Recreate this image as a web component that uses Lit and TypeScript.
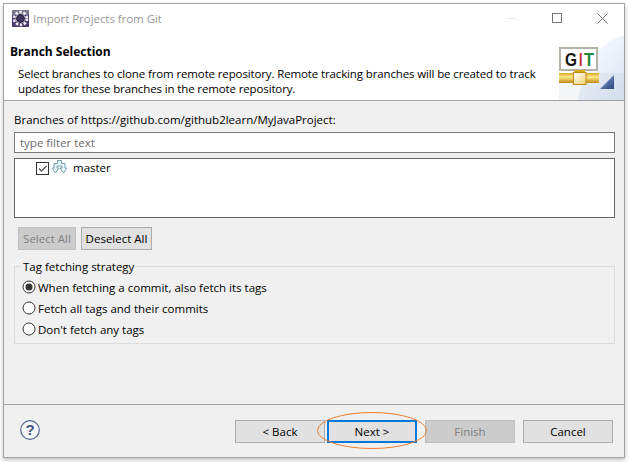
import { LitElement, html, svg, css } from "lit";
import { customElement } from "lit/decorators.js";

const svgDot = svg`<circle cx="7" cy="7" r="3.500" fill="#333"/>`;

@customElement("app-root")
export class AppRoot extends LitElement {
  static styles = css`
    :host { display: block; width: 629px; height: 462px; background: #fff; font-family: "Open Sans", "Noto Sans", sans-serif; font-size: 11.5px; color: #000; overflow: hidden; }
    .page { padding: 3px 4px 4px 3px; height: 462px; box-sizing: border-box; }
    .win { position: relative; height: 455px; box-sizing: border-box; border: 1px solid #a3a3a3; background: #f0f0f0; display: flex; flex-direction: column; box-shadow: 0 2px 4px rgba(0,0,0,.25); }
    .title { height: 29px; flex: none; background: #fff; display: flex; align-items: center; padding-left: 8px; gap: 4px; color: #999; }
    .title .t { flex: 1; letter-spacing: -0.05px; }
    .wc { display: flex; align-items: center; }
    .wc svg { display: block; }
    .hdr { position: relative; height: 57px; flex: none; background: #fff; border-bottom: 1px solid #a0a0a0; padding: 10px 0 0 6px; box-sizing: content-box; overflow: hidden; }
    .hdr h1 { margin: 0; font-size: 12px; font-weight: 700; line-height: 18px; }
    .hdr p { margin: 5px 0 0 8px; line-height: 15px; width: 535px; letter-spacing: -0.13px; }
    .art { position: absolute; right: 0; top: 0; }
    .main { flex: 1; padding: 10px 9px 0 10px; display: flex; flex-direction: column; }
    .lbl { line-height: 18px; }
    .filter { margin-top: 3px; height: 21px; box-sizing: border-box; border: 1px solid #7a7a7a; background: #fff; padding-left: 5px; line-height: 19px; color: #6d6d6d; }
    .tree { margin-top: 5px; height: 60px; box-sizing: border-box; border: 1px solid #666; background: #fff; padding: 0 0 0 21px; display: flex; align-items: flex-start; gap: 3px; }
    .tree span { line-height: 16px; margin: 1px 0 0 3px; }
    .tree svg { display: block; flex: none; }
    .check { margin-top: 3px; }
    .branch { margin-top: 1px; }
    .btns { margin-top: 9px; margin-left: 4px; display: flex; gap: 5px; }
    .btn { box-sizing: border-box; height: 23px; border: 1px solid #adadad; background: #e1e1e1; display: flex; align-items: center; justify-content: center; color: #000; }
    .btn.off { background: #ccc; border-color: #bfbfbf; color: #808080; }
    .sa { width: 58px; }
    .da { width: 71px; }
    .group { position: relative; margin-top: 16px; height: 78px; box-sizing: border-box; border: 1px solid #dcdcdc; padding: 11px 0 0 7px; display: flex; flex-direction: column; gap: 3px; }
    .legend { position: absolute; left: 6px; top: -8px; background: #f0f0f0; padding: 0 2px; line-height: 16px; }
    .radio { display: flex; align-items: center; gap: 2px; height: 18px; }
    .radio svg { display: block; flex: none; }
    .foot { flex: none; height: 53px; border-top: 1px solid #a0a0a0; display: flex; align-items: flex-start; padding: 15px 11px 0 16px; box-sizing: border-box; }
    .help { display: block; }
    .spacer { flex: 1; }
    .foot .btn { width: 90px; height: 23px; }
    .foot .row { display: flex; align-items: center; }
    .foot .next { border: 2px solid #0078d7; margin-left: 2px; }
    .finish { margin-left: 8px; }
    .cancel { margin-left: 8px; }
    .oval { position: absolute; left: 313px; top: 408px; pointer-events: none; }
  `;

  render() {
    const radio = (on: boolean, t: string) => html`<div class="radio">
      <svg width="14" height="14" viewBox="0 0 14 14"><circle cx="7" cy="7" r="6" fill="#fff" stroke="#333" stroke-width="1"/>${on ? svgDot : ""}</svg><span>${t}</span></div>`;
    return html`<div class="page"><div class="win">
      <div class="title">
        <svg width="17" height="17" viewBox="0 0 17 17"><rect width="17" height="17" fill="#4b3a6e"/><rect width="17" height="5" fill="#77768a"/><circle cx="8.500" cy="8.500" r="6.500" fill="none" stroke="#eeeef2" stroke-width="2.500" stroke-dasharray="2.500 1.600"/><circle cx="8.500" cy="8.500" r="5" fill="#d9d9e3"/><circle cx="8.500" cy="8.500" r="3.800" fill="#3f3560" stroke="#23203a" stroke-width="1.200"/></svg>
        <span class="t">Import Projects from Git</span>
        <div class="wc">
          <svg width="140" height="29" viewBox="0 0 140 29">
            <path d="M22 14.500h10" stroke="#e8e8e8" fill="none"/>
            <rect x="68.500" y="9.500" width="9" height="9" fill="none" stroke="#777"/>
            <path d="M113.500 9.500l10 10M123.500 9.500l-10 10" stroke="#777" fill="none"/>
          </svg>
        </div>
      </div>
      <div class="hdr">
        <h1>Branch Selection</h1>
        <p>Select branches to clone from remote repository. Remote tracking branches will be created to track updates for these branches in the remote repository.</p>
        <svg class="art" width="75" height="67" viewBox="0 0 75 67">
          <defs>
            <linearGradient id="bg" x1="0" y1="0" x2="1" y2="1"><stop offset="0" stop-color="#fff"/><stop offset="1" stop-color="#dbe4f4"/></linearGradient>
            <linearGradient id="pipe" x1="0" y1="0" x2="0" y2="1"><stop offset="0" stop-color="#d8a91f"/><stop offset=".4" stop-color="#fbe98c"/><stop offset="1" stop-color="#c08a10"/></linearGradient>
            <linearGradient id="jn" x1="0" y1="0" x2="1" y2="1"><stop offset="0" stop-color="#fff"/><stop offset="1" stop-color="#f0d070"/></linearGradient>
            <linearGradient id="tri" x1="0" y1="0" x2="1" y2="1"><stop offset="0" stop-color="#8aa5d0"/><stop offset="1" stop-color="#28467f"/></linearGradient>
          </defs>
          <path d="M75 2C50 10 35 30 29 67H75Z" fill="url(#bg)"/>
          <path d="M10 40h65v27H10Z" fill="#8d9ab4" opacity=".1"/>
          <rect x="11" y="15" width="37" height="22" fill="#fff" stroke="#b3b3a8" stroke-width="2"/>
          <text x="16" y="33" font-family="Liberation Sans" font-size="19" font-weight="700" fill="#111" textLength="12" lengthAdjust="spacingAndGlyphs">G</text>
          <text x="30" y="33" font-family="Liberation Sans" font-size="19" font-weight="700" fill="#c62828" textLength="3.500" lengthAdjust="spacingAndGlyphs">I</text>
          <text x="35" y="33" font-family="Liberation Sans" font-size="19" font-weight="700" fill="#1f8a3a" textLength="10" lengthAdjust="spacingAndGlyphs">T</text>
          <rect x="10" y="40" width="40" height="10" fill="url(#pipe)"/>
          <rect x="25" y="37" width="11" height="3" fill="#d8a91f"/>
          <rect x="24.500" y="39.500" width="12.500" height="12" fill="url(#jn)" stroke="#c08a10"/>
          <path d="M51 56L65 42V56Z" fill="url(#tri)"/>
        </svg>
      </div>
      <div class="main">
        <div class="lbl">Branches of https://github.com/github2learn/MyJavaProject:</div>
        <div class="filter">type filter text</div>
        <div class="tree">
          <svg class="check" width="13" height="13" viewBox="0 0 13 13"><rect x=".5" y=".5" width="12" height="12" fill="#fff" stroke="#333"/><path d="M3 6.500l2.500 2.500 5-5" fill="none" stroke="#555" stroke-width="1.300"/></svg>
          <svg class="branch" width="15" height="14" viewBox="0 0 15 14" fill="#eaf5f5" stroke="#6f9faa"><path d="M5.500.5H9.500V3.500H13V8H15L11.500 13L8 8H10V6H5V8H7L3.500 13L0 8H2V3.500H5.500Z"/></svg>
          <span>master</span>
        </div>
        <div class="btns">
          <div class="btn off sa">Select All</div>
          <div class="btn da">Deselect All</div>
        </div>
        <div class="group">
          <div class="legend">Tag fetching strategy</div>
          ${radio(true, "When fetching a commit, also fetch its tags")}
          ${radio(false, "Fetch all tags and their commits")}
          ${radio(false, "Don't fetch any tags")}
        </div>
      </div>
      <div class="foot">
        <svg class="help" width="20" height="20" viewBox="0 0 20 20"><circle cx="10" cy="10" r="9.300" fill="#f4f6fa" stroke="#54688c" stroke-width="1.200"/><text x="10" y="15" text-anchor="middle" font-family="Liberation Sans" font-size="15" font-weight="700" fill="#41557c">?</text></svg>
        <div class="spacer"></div>
        <div class="row">
          <div class="btn">&lt; Back</div>
          <div class="btn next">Next &gt;</div>
          <div class="btn off finish">Finish</div>
          <div class="btn cancel">Cancel</div>
        </div>
      </div>
      <svg class="oval" width="111" height="37" viewBox="0 0 111 37"><ellipse cx="55" cy="18.500" rx="54.500" ry="18" fill="none" stroke="#ed7d31" stroke-width="1"/></svg>
    </div></div>`;
  }
}
